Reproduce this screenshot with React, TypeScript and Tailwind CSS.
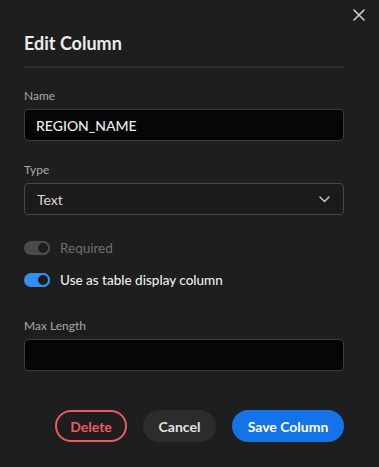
import React from "react";

function Toggle({ disabled }: { disabled?: boolean }) {
  const track = disabled ? "bg-[#4b4b4b]" : "bg-[#378ef0]";
  const ring = disabled ? "border-[#4b4b4b]" : "border-[#378ef0]";
  return (
    <div className={`relative w-[26px] h-[14px] rounded-full ${track}`}>
      <div className={`absolute top-0 right-0 w-[14px] h-[14px] rounded-full bg-[#1d1d1d] border-2 ${ring}`} />
    </div>
  );
}

export default function App() {
  return (
    <div
      className="w-[379px] h-[467px] bg-[#1e1e1e] relative overflow-hidden"
      style={{ fontFamily: "Lato, 'Noto Sans', sans-serif" }}
    >
      <button className="absolute top-[9px] right-[14px] w-[12px] h-[12px] flex items-center justify-center">
        <svg width="12" height="12" viewBox="0 0 12 12">
          <path d="M1 1 L11 11 M11 1 L1 11" stroke="#cfcfcf" strokeWidth="1.6" strokeLinecap="round" />
        </svg>
      </button>
      <div className="pl-[24px] pr-[35px] pt-[31px] flex flex-col">
        <h2 className="text-[18px] leading-[24px] font-bold text-[#ebebeb]">Edit Column</h2>
        <div className="mt-[11px] h-[2px] bg-[#2e2e2e]" />

        <label className="mt-[20px] text-[12px] leading-[16px] text-[#a8a8a8]">Name</label>
        <div className="mt-[5px] h-[32px] rounded-[4px] bg-[#060606] border border-[#3c3c3c] flex items-center px-[11px] text-[14px] font-medium text-[#ececec]">
          REGION_NAME
        </div>

        <label className="mt-[21px] text-[12px] leading-[16px] text-[#a8a8a8]">Type</label>
        <div className="mt-[5px] h-[32px] rounded-[4px] bg-[#1b1b1b] border border-[#484848] flex items-center justify-between px-[12px] text-[14px] text-[#d8d8d8]">
          <span>Text</span>
          <svg width="11" height="7" viewBox="0 0 11 7" className="mr-[1px]">
            <path d="M1 1 L5.5 5.5 L10 1" stroke="#bdbdbd" strokeWidth="1.6" fill="none" strokeLinecap="round" strokeLinejoin="round" />
          </svg>
        </div>

        <div className="mt-[26px] flex items-center gap-[10px] h-[14px]">
          <Toggle disabled />
          <span className="text-[13.5px] text-[#6f6f6f]">Required</span>
        </div>
        <div className="mt-[18px] flex items-center gap-[10px] h-[14px]">
          <Toggle />
          <span className="text-[13.5px] font-medium text-[#ececec]">Use as table display column</span>
        </div>

        <label className="mt-[31px] text-[12px] leading-[16px] text-[#a8a8a8]">Max Length</label>
        <div className="mt-[5px] h-[32px] rounded-[4px] bg-[#060606] border border-[#3c3c3c]" />

        <div className="mt-[39px] flex justify-end gap-[16px]">
          <button className="h-[32px] w-[72px] rounded-full border-2 border-[#ec5b62] text-[#ec5b62] text-[14px] font-bold flex items-center justify-center">
            Delete
          </button>
          <button className="h-[32px] w-[73px] rounded-full bg-[#2c2c2c] text-[#e3e3e3] text-[14px] font-bold flex items-center justify-center">
            Cancel
          </button>
          <button className="h-[32px] w-[112px] rounded-full bg-[#1473e6] text-white text-[14px] font-bold flex items-center justify-center">
            Save Column
          </button>
        </div>
      </div>
    </div>
  );
}
